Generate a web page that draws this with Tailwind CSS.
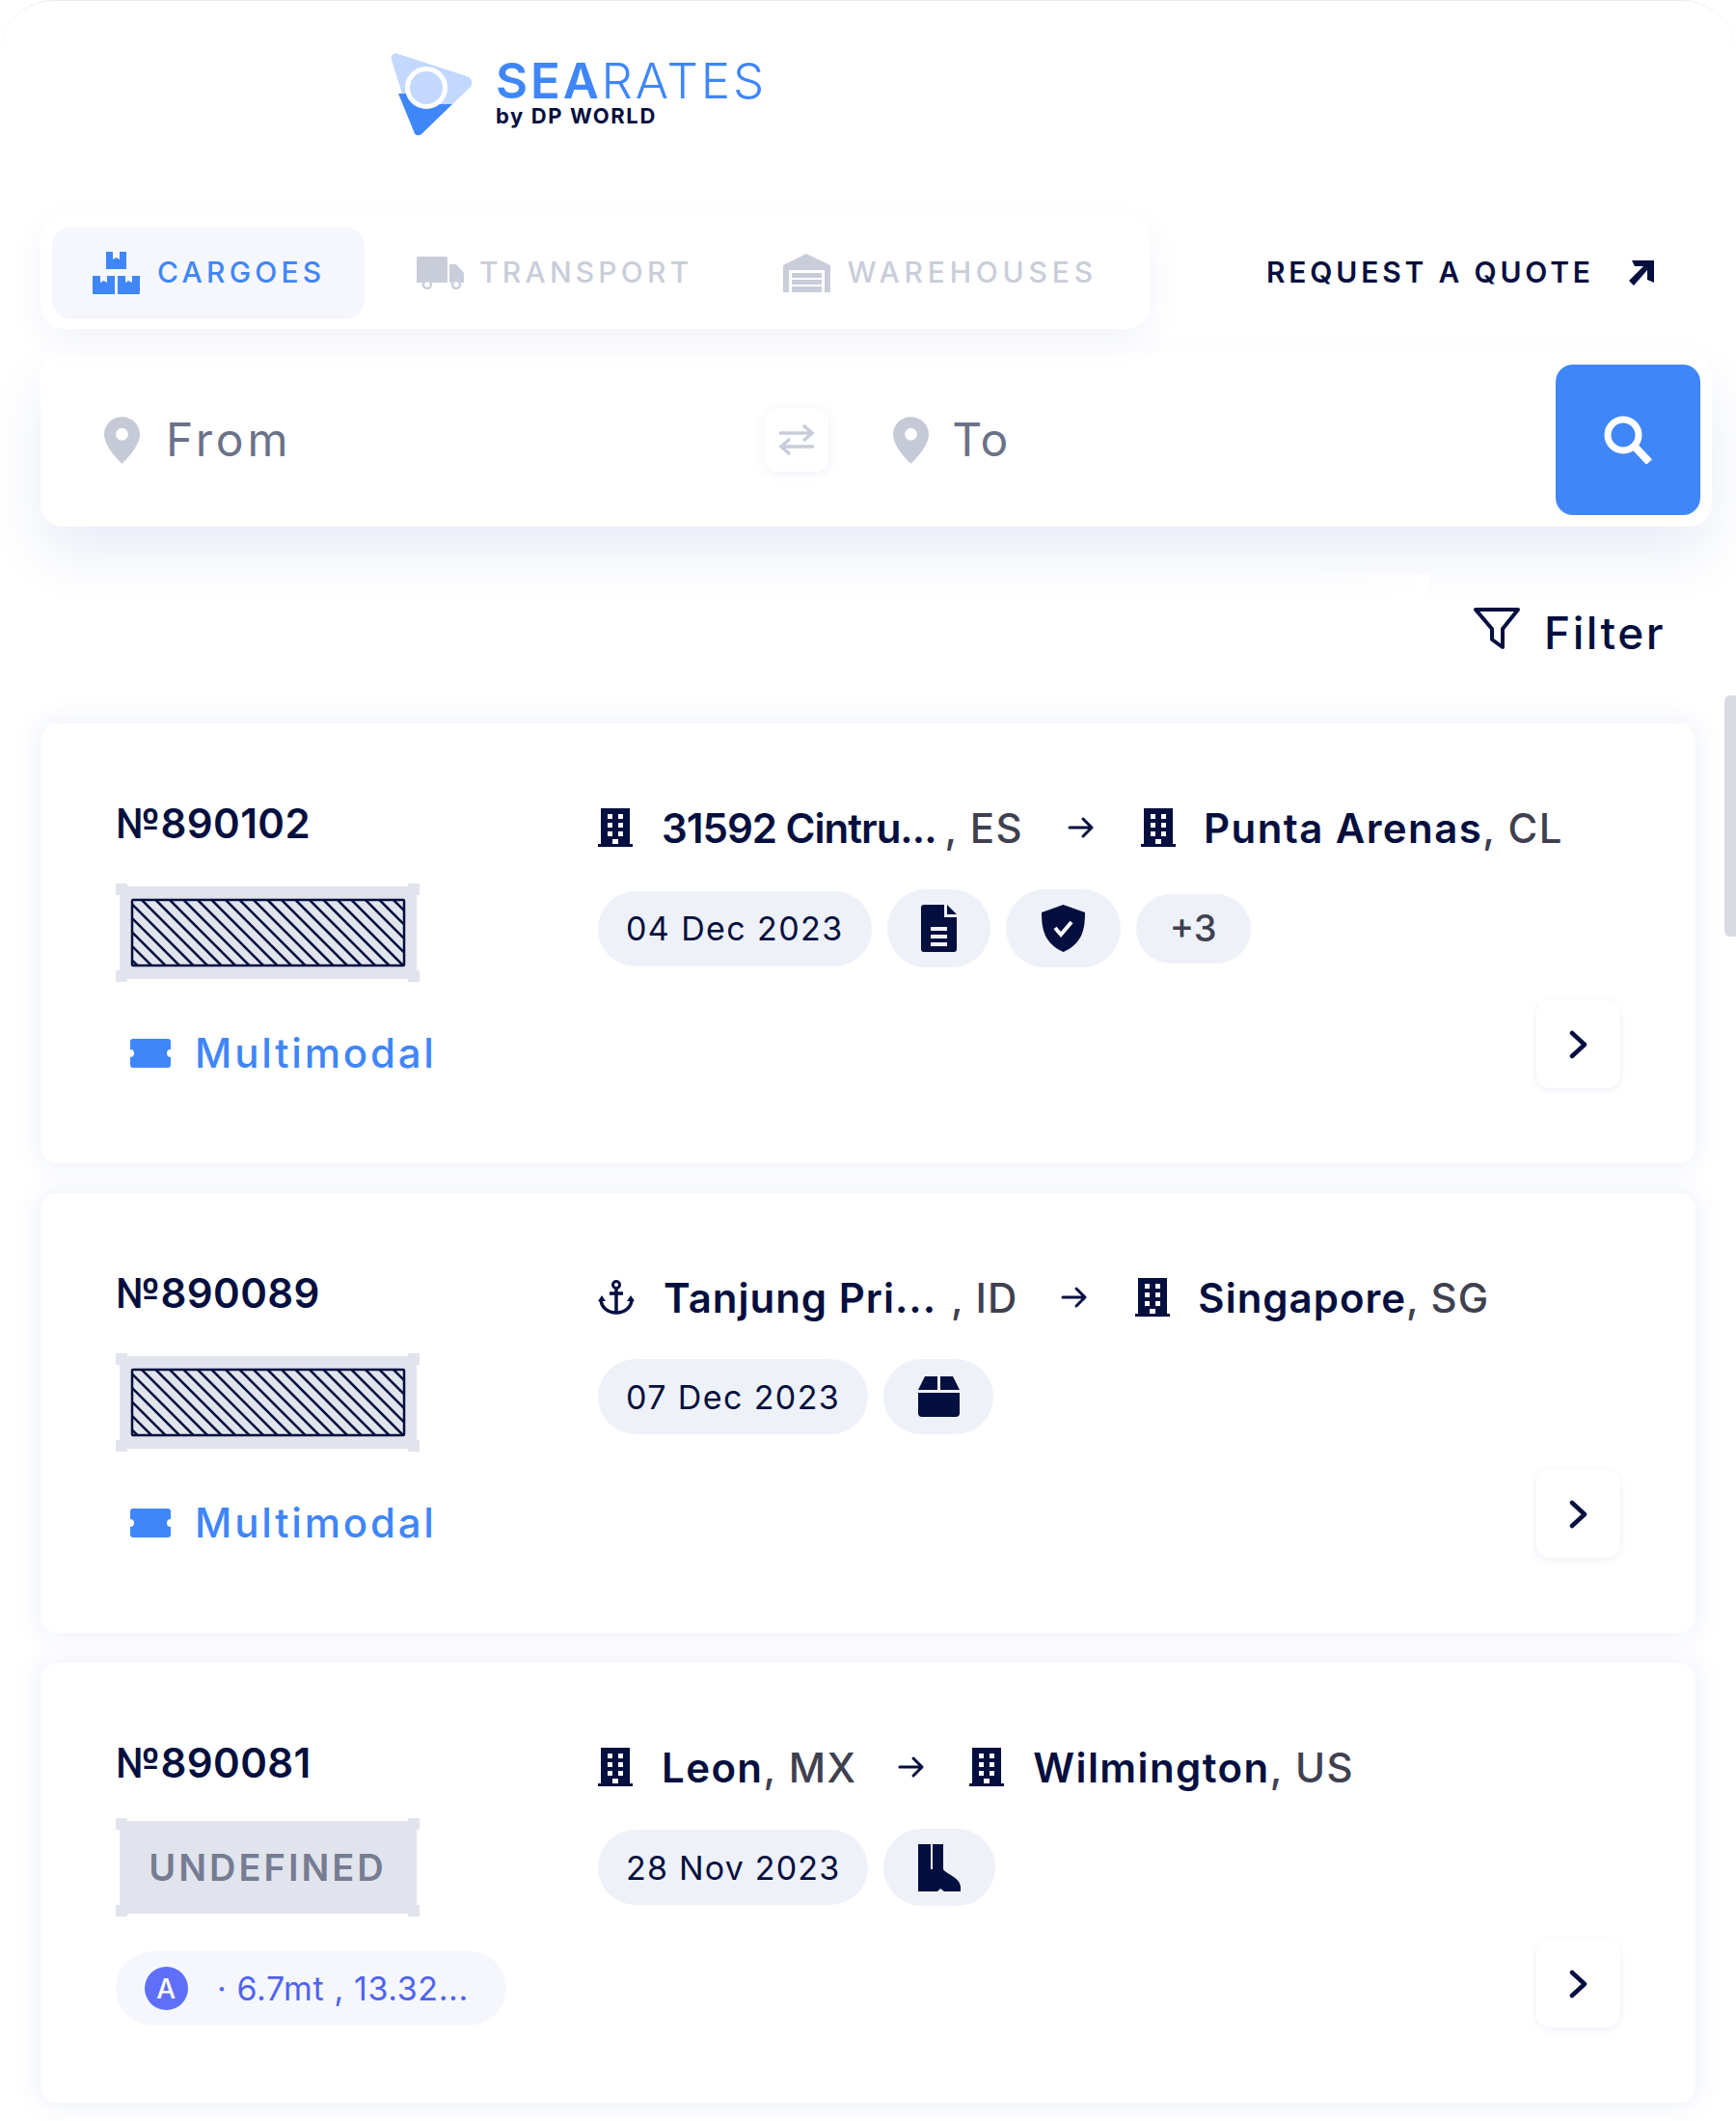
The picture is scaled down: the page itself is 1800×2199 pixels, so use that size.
<!DOCTYPE html>
<html lang="en">
<head>
    <meta charset="UTF-8">
    <meta name="viewport" content="width=device-width, initial-scale=1.0">
    <title>Searates Cargoes</title>
    <script src="https://cdn.jsdelivr.net/npm/@tailwindcss/browser@4"></script>
</head>
<body class="bg-white font-['Inter',sans-serif] text-[#030f3e]">
    <svg class="absolute w-0 h-0">
        <defs>
            <clipPath id="hatch-clip"><rect x="17" y="17" width="282" height="68"/></clipPath>
        </defs>
        <symbol id="building" viewBox="0 0 36 40">
            <path fill="#030f3e" fill-rule="evenodd" d="M3 0h30v37h3v3H0v-3h3zM10 6v5h5V6zm11 0v5h5V6zM10 15v5h5v-5zm11 0v5h5v-5zM10 24v5h5v-5zm11 0v5h5v-5zM15 32v5h6v-5z"/>
        </symbol>
        <symbol id="arrow" viewBox="0 0 28 24">
            <path fill="none" stroke="#030f3e" stroke-width="3" stroke-linecap="round" stroke-linejoin="round" d="M2 12h23M16 3l9 9-9 9"/>
        </symbol>
        <symbol id="chevron" viewBox="0 0 20 30">
            <path fill="none" stroke="#030f3e" stroke-width="4.500" stroke-linecap="round" stroke-linejoin="round" d="M3 3l13 12L3 27"/>
        </symbol>
        <symbol id="pin" viewBox="0 0 38 50">
            <path fill="#c6cad6" fill-rule="evenodd" d="M19 0c10.500 0 19 8.300 19 18.500C38 30 26 43 19 50 12 43 0 30 0 18.500 0 8.300 8.500 0 19 0zm0 12a6.500 6.500 0 100 13 6.500 6.500 0 000-13z"/>
        </symbol>
        <symbol id="ticket" viewBox="0 0 42 30">
            <path fill="#3f86f9" d="M3 0h36a3 3 0 013 3v8a4 4 0 000 8v8a3 3 0 01-3 3H3a3 3 0 01-3-3v-8a4 4 0 000-8V3a3 3 0 013-3z"/>
        </symbol>
        <symbol id="container" viewBox="0 0 315 102">
            <path fill="#e1e4ec" d="M0 0h12v3h291V0h12v12h-3v78h3v12h-12v-3H12v3H0V90h4V12H0z"/>
            <rect x="4" y="3" width="307" height="96" fill="#e1e4ec"/>
            <g clip-path="url(#hatch-clip)" stroke="#030f3e" stroke-width="2.500">
                <path d="M-60 17l68 68M-45.500 17l68 68M-31 17l68 68M-16.500 17l68 68M-2 17l68 68M12.500 17l68 68M27 17l68 68M41.500 17l68 68M56 17l68 68M70.500 17l68 68M85 17l68 68M99.500 17l68 68M114 17l68 68M128.500 17l68 68M143 17l68 68M157.500 17l68 68M172 17l68 68M186.500 17l68 68M201 17l68 68M215.500 17l68 68M230 17l68 68M244.500 17l68 68M259 17l68 68M273.500 17l68 68M288 17l68 68"/>
            </g>
            <rect x="17" y="17" width="282" height="68" rx="1" fill="none" stroke="#030f3e" stroke-width="2.500"/>
        </symbol>
    </svg>

    <div class="relative w-[1800px] h-[2199px] overflow-hidden rounded-t-[56px] border-t border-[#eceef3] bg-white">
        <!-- logo -->
        <header class="h-[223px] pl-[405px] pt-[54px]">
            <div class="flex gap-[24px]">
                <svg class="w-[85px] h-[86px] shrink-0" viewBox="0 0 85 86">
                    <path fill="#c3d8ff" d="M1 7C0 2 4-1 8 1l71 23c5 2 7 6 4 11L34 82c-4 5-9 4-10 -1z"/>
                    <path fill="#3f86f9" d="M8 42H40V53H64L34 82c-4 5-9 4-10-1z"/>
                    <circle cx="37" cy="36" r="19.500" fill="#c3d8ff" stroke="#fff" stroke-width="5"/>
                </svg>
                <div class="pt-[3px]">
                    <div class="text-[51px] leading-[51px] text-[#3f86f9] tracking-[2.800px] font-light"><span class="font-semibold">SEA</span>RATES</div>
                    <div class="mt-[1px] text-[22px] leading-[20px] font-bold tracking-[1.600px]">by DP WORLD</div>
                </div>
            </div>
        </header>

        <!-- tabs -->
        <div class="flex items-center px-[42px]">
            <nav class="flex items-center w-[1150px] h-[117px] pl-[12px] bg-white rounded-[24px] shadow-[0_12px_36px_#f1f3fa]">
                <a class="flex items-center gap-[17px] w-[324px] h-[96px] pl-[42px] rounded-[20px] bg-[#f5f7fc] text-[#3f86f9] text-[30px] font-medium tracking-[4.200px]">
                    <svg class="w-[50px] h-[44px]" viewBox="0 0 50 44">
                        <path fill="#3f86f9" d="M14 0h7v8l3.500-2 3.500 2V0h7v18H14zM0 25h8v7l3.500-2 3.500 2v-7h8v19H1a1 1 0 01-1-1zM26 25h8v7l3.500-2 3.500 2v-7h8v18a1 1 0 01-1 1H26z"/>
                    </svg>
                    CARGOES
                </a>
                <a class="flex items-center gap-[16px] ml-[54px] text-[#c9cdd9] text-[30px] font-medium tracking-[4.200px]">
                    <svg class="w-[49px] h-[34px]" viewBox="0 0 49 34">
                        <path fill="#c9cdd9" d="M2 0h28a2 2 0 012 2v25H16a6 6 0 00-10 0H0V2a2 2 0 012-2zM34 8h7l8 9v10h-3a6 6 0 00-10 0h-2z"/>
                        <circle cx="11" cy="29" r="4" fill="none" stroke="#c9cdd9" stroke-width="2.500"/>
                        <circle cx="41" cy="29" r="4" fill="none" stroke="#c9cdd9" stroke-width="2.500"/>
                    </svg>
                    TRANSPORT
                </a>
                <a class="flex items-center gap-[17px] ml-[94px] text-[#c9cdd9] text-[30px] font-medium tracking-[4.800px]">
                    <svg class="w-[49px] h-[40px]" viewBox="0 0 49 40">
                        <path fill="#c9cdd9" d="M0 12L24 0l25 12v28h-6V17H6v23H0z"/>
                        <path fill="#c9cdd9" d="M9 20h31v5H9zM9 27h31v5H9zM9 34h31v6H9z"/>
                    </svg>
                    WAREHOUSES
                </a>
            </nav>
            <a class="flex items-center ml-[121px] text-[30px] font-semibold tracking-[3.800px]">
                REQUEST A QUOTE
                <svg class="w-[26px] h-[26px] ml-[36px]" viewBox="0 0 26 26">
                    <path fill="#030f3e" d="M3 0h23v23l-7-3V10L5 26l-5-5L15 6H6z"/>
                </svg>
            </a>
        </div>

        <!-- search -->
        <div class="flex items-center w-[1733px] h-[180px] ml-[42px] mt-[25px] bg-white rounded-[24px] shadow-[0_30px_60px_#e9edf7]">
            <svg class="w-[37px] h-[49px] ml-[66px]"><use href="#pin"/></svg>
            <span class="ml-[27px] text-[48px] tracking-[3.800px] text-[#6b7288]">From</span>
            <div class="flex items-center justify-center w-[66px] h-[66px] ml-[491px] rounded-[14px] bg-white shadow-[0_2px_14px_#eef0f7]">
                <svg class="w-[38px] h-[34px]" viewBox="0 0 38 34">
                    <path fill="none" stroke="#c9cdd9" stroke-width="3.500" d="M1 10h34M26 2l9 8-9 8M37 24H3M12 16l-9 8 9 8"/>
                </svg>
            </div>
            <svg class="w-[37px] h-[49px] ml-[67px]"><use href="#pin"/></svg>
            <span class="ml-[24px] text-[48px] tracking-[2px] text-[#6b7288]">To</span>
            <button class="flex items-center justify-center w-[150px] h-[156px] ml-auto mr-[12px] rounded-[18px] bg-[#3f86f9]">
                <svg class="w-[50px] h-[50px]" viewBox="0 0 50 50">
                    <circle cx="20" cy="20" r="16" fill="none" stroke="#fff" stroke-width="7"/>
                    <path stroke="#fff" stroke-width="8" d="M31 31l16 17"/>
                </svg>
            </button>
        </div>

        <!-- white patch left over in the shadow -->
        <div class="absolute left-[1360px] top-[594px] w-[122px] h-[70px] bg-gradient-to-r from-transparent to-white"></div>

        <!-- filter -->
        <div class="relative flex items-center justify-end h-[100px] mt-[60px] pr-[73px] text-[46px] font-medium tracking-[2.500px]">
            <svg class="w-[48px] h-[43px] mr-[25px] mb-[10px]" viewBox="0 0 48 43">
                <path fill="none" stroke="#030f3e" stroke-width="4" stroke-linejoin="round" d="M2 2h44L30 22v19l-11-8V22z"/>
            </svg>
            Filter
        </div>

        <!-- cards -->
        <main class="relative flex flex-col gap-[31px] w-[1716px] ml-[42px] mt-[44px]">

            <article class="flex h-[456px] px-[78px] bg-white rounded-[18px] shadow-[0_0_24px_8px_#f3f5fb]">
                <div class="w-[500px] shrink-0 pt-[80px]">
                    <div class="text-[42px] leading-[48px] font-semibold tracking-[0.400px]">№890102</div>
                    <svg class="w-[315px] h-[102px] mt-[38px]"><use href="#container"/></svg>
                    <div class="flex items-center gap-[25px] mt-[50px] ml-[15px] text-[42px] leading-[48px] font-medium tracking-[2.800px] text-[#3f86f9]">
                        <svg class="w-[42px] h-[30px]"><use href="#ticket"/></svg>
                        Multimodal
                    </div>
                </div>
                <div class="flex-1 min-w-0 pt-[88px]">
                    <div class="flex items-center h-[40px] whitespace-nowrap text-[42px] font-semibold tracking-[1.400px]">
                        <svg class="w-[36px] h-[40px] shrink-0"><use href="#building"/></svg>
                        <span class="ml-[30px] tracking-[-1px]">31592 Cintru...</span><span class="ml-[9px] font-medium text-[#3f4150]">, ES</span>
                        <svg class="w-[28px] h-[24px] ml-[46px] shrink-0"><use href="#arrow"/></svg>
                        <svg class="w-[36px] h-[40px] ml-[48px] shrink-0"><use href="#building"/></svg>
                        <span class="ml-[29px]">Punta Arenas</span><span class="font-medium text-[#3f4150]">, CL</span>
                    </div>
                    <div class="flex items-center gap-[16px] mt-[44px]">
                        <span class="flex items-center h-[78px] px-[29px] rounded-full bg-[#eef1f8] text-[34px] tracking-[1.400px]">04 Dec 2023</span>
                        <span class="flex items-center justify-center w-[107px] h-[81px] rounded-full bg-[#eef1f8]">
                            <svg class="w-[37px] h-[49px]" viewBox="0 0 37 49">
                                <path fill="#030f3e" fill-rule="evenodd" d="M3 0h21v13h13v33a3 3 0 01-3 3H3a3 3 0 01-3-3V3a3 3 0 013-3zM27 0l10 10H27zM10 23v4h17v-4zm0 8v4h17v-4zm0 8v4h17v-4z"/>
                            </svg>
                        </span>
                        <span class="flex items-center justify-center w-[119px] h-[81px] rounded-full bg-[#eef1f8]">
                            <svg class="w-[45px] h-[49px]" viewBox="0 0 45 49">
                                <path fill="#030f3e" d="M22.500 0L45 8c0 18-3 32-22.500 41C3 40 0 26 0 8z"/>
                                <path fill="none" stroke="#fff" stroke-width="4" d="M14 24l6 7 11-13"/>
                            </svg>
                        </span>
                        <span class="flex items-center justify-center w-[119px] h-[72px] rounded-full bg-[#eef1f8] text-[38px] font-medium text-[#3f4150]">+3</span>
                    </div>
                </div>
                <a class="flex items-center justify-center self-end shrink-0 w-[87px] h-[91px] mb-[78px] rounded-[14px] bg-white shadow-[0_2px_10px_#eef0f7]">
                    <svg class="w-[20px] h-[30px]"><use href="#chevron"/></svg>
                </a>
            </article>

            <article class="flex h-[456px] px-[78px] bg-white rounded-[18px] shadow-[0_0_24px_8px_#f3f5fb]">
                <div class="w-[500px] shrink-0 pt-[80px]">
                    <div class="text-[42px] leading-[48px] font-semibold tracking-[0.400px]">№890089</div>
                    <svg class="w-[315px] h-[102px] mt-[38px]"><use href="#container"/></svg>
                    <div class="flex items-center gap-[25px] mt-[50px] ml-[15px] text-[42px] leading-[48px] font-medium tracking-[2.800px] text-[#3f86f9]">
                        <svg class="w-[42px] h-[30px]"><use href="#ticket"/></svg>
                        Multimodal
                    </div>
                </div>
                <div class="flex-1 min-w-0 pt-[88px]">
                    <div class="flex items-center h-[40px] whitespace-nowrap text-[42px] font-semibold tracking-[1px]">
                        <svg class="w-[38px] h-[36px] shrink-0" viewBox="0 0 38 36">
                            <path fill="none" stroke="#030f3e" stroke-width="3.500" d="M19 9v26M12 14h14M3 20c0 8 7 14 16 14s16-6 16-14"/>
                            <circle cx="19" cy="5" r="3.500" fill="none" stroke="#030f3e" stroke-width="3"/>
                            <path fill="#030f3e" d="M0 22l4-6 4 6zM30 22l4-6 4 6z"/>
                        </svg>
                        <span class="ml-[30px]">Tanjung Pri...</span><span class="ml-[15px] font-medium text-[#3f4150]">, ID</span>
                        <svg class="w-[28px] h-[24px] ml-[45px] shrink-0"><use href="#arrow"/></svg>
                        <svg class="w-[36px] h-[40px] ml-[49px] shrink-0"><use href="#building"/></svg>
                        <span class="ml-[29px]">Singapore</span><span class="font-medium text-[#3f4150]">, SG</span>
                    </div>
                    <div class="flex items-center gap-[16px] mt-[44px]">
                        <span class="flex items-center h-[78px] px-[29px] rounded-full bg-[#eef1f8] text-[34px] tracking-[1.400px]">07 Dec 2023</span>
                        <span class="flex items-center justify-center w-[114px] h-[78px] rounded-full bg-[#eef1f8]">
                            <svg class="w-[43px] h-[42px]" viewBox="0 0 43 42">
                                <path fill="#030f3e" d="M7 0h13v14H0zM23 0h13l7 14H23zM0 17h43v21a4 4 0 01-4 4H4a4 4 0 01-4-4z"/>
                            </svg>
                        </span>
                    </div>
                </div>
                <a class="flex items-center justify-center self-end shrink-0 w-[87px] h-[91px] mb-[78px] rounded-[14px] bg-white shadow-[0_2px_10px_#eef0f7]">
                    <svg class="w-[20px] h-[30px]"><use href="#chevron"/></svg>
                </a>
            </article>

            <article class="flex h-[456px] px-[78px] bg-white rounded-[18px] shadow-[0_0_24px_8px_#f3f5fb]">
                <div class="w-[500px] shrink-0 pt-[80px]">
                    <div class="text-[42px] leading-[48px] font-semibold tracking-[0.400px]">№890081</div>
                    <div class="relative flex items-center justify-center w-[315px] h-[102px] mt-[33px]">
                        <svg class="absolute inset-0 w-[315px] h-[102px]" viewBox="0 0 315 102">
                            <path fill="#e1e4ec" d="M0 0h12v3h291V0h12v12h-3v78h3v12h-12v-3H12v3H0V90h4V12H0z"/>
                            <rect x="4" y="3" width="307" height="96" fill="#e1e4ec"/>
                        </svg>
                        <span class="relative text-[38px] font-semibold tracking-[3px] text-[#767c93]">UNDEFINED</span>
                    </div>
                    <div class="flex items-center w-[405px] h-[77px] mt-[36px] pl-[30px] rounded-full bg-[#f5f7fc] text-[34px] tracking-[0.600px] text-[#4f63f0]">
                        <span class="flex items-center justify-center w-[45px] h-[45px] rounded-full bg-[#5f6ffa] text-[28px] font-medium text-white">A</span>
                        <span class="ml-[30px]">· 6.7mt , 13.32...</span>
                    </div>
                </div>
                <div class="flex-1 min-w-0 pt-[88px]">
                    <div class="flex items-center h-[40px] whitespace-nowrap text-[42px] font-semibold tracking-[1.400px]">
                        <svg class="w-[36px] h-[40px] shrink-0"><use href="#building"/></svg>
                        <span class="ml-[30px]">Leon</span><span class="font-medium text-[#3f4150]">, MX</span>
                        <svg class="w-[28px] h-[24px] ml-[43px] shrink-0"><use href="#arrow"/></svg>
                        <svg class="w-[36px] h-[40px] ml-[46px] shrink-0"><use href="#building"/></svg>
                        <span class="ml-[30px]">Wilmington</span><span class="font-medium text-[#3f4150]">, US</span>
                    </div>
                    <div class="flex items-center gap-[16px] mt-[44px]">
                        <span class="flex items-center h-[78px] px-[29px] rounded-full bg-[#eef1f8] text-[34px] tracking-[1.200px]">28 Nov 2023</span>
                        <span class="flex items-center justify-center w-[116px] h-[80px] rounded-full bg-[#eef1f8]">
                            <svg class="w-[44px] h-[49px]" viewBox="0 0 44 49">
                                <path fill="#030f3e" d="M0 0h13v26h2V0h11v26c3 5 17 8 18 18v5H27l-4-3-3 3H0z"/>
                            </svg>
                        </span>
                    </div>
                </div>
                <a class="flex items-center justify-center self-end shrink-0 w-[87px] h-[91px] mb-[78px] rounded-[14px] bg-white shadow-[0_2px_10px_#eef0f7]">
                    <svg class="w-[20px] h-[30px]"><use href="#chevron"/></svg>
                </a>
            </article>
        </main>

        <!-- scrollbar -->
        <div class="absolute right-0 top-[720px] w-[12px] h-[250px] rounded-l-[6px] bg-[#d9dbe2]"></div>
    </div>
</body>
</html>
